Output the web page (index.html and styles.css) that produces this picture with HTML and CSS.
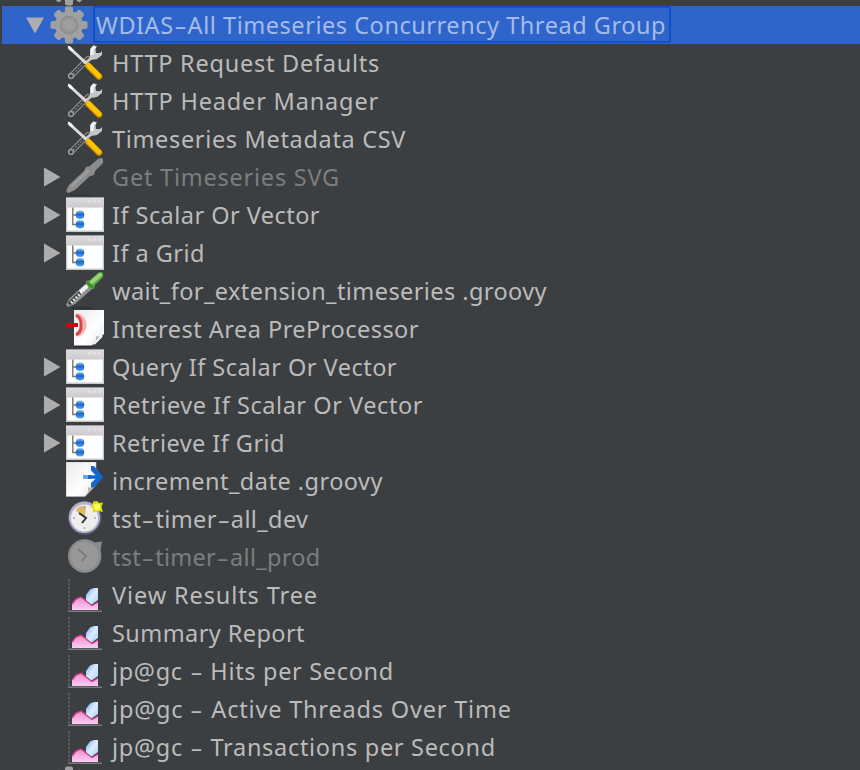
FILE: index.html
```
<!DOCTYPE html>
<html lang="en">
<head>
<meta charset="utf-8">
<title>Test Plan</title>
<link rel="stylesheet" href="styles.css">
</head>
<body>
<svg class="defs" aria-hidden="true">
  <defs>
    <linearGradient id="blade" x1="0" y1="0" x2="0" y2="1"><stop offset="0" stop-color="#dedce0"/><stop offset="1" stop-color="#cbcacc"/></linearGradient>
    <linearGradient id="ball" x1="0" y1="0" x2="0" y2="1"><stop offset="0" stop-color="#9cc4f4"/><stop offset=".45" stop-color="#1765cc"/><stop offset="1" stop-color="#5ba6f5"/></linearGradient>
    <linearGradient id="paper" x1="0" y1="0" x2="1" y2="1"><stop offset="0" stop-color="#e9e9e9"/><stop offset=".6" stop-color="#ffffff"/><stop offset="1" stop-color="#e4e4e4"/></linearGradient>
    <linearGradient id="pink" x1="0" y1="0" x2="0" y2="1"><stop offset="0" stop-color="#f08cc8"/><stop offset="1" stop-color="#fbcbf6"/></linearGradient>
    <linearGradient id="sky" x1="0" y1="0" x2="1" y2="1"><stop offset="0" stop-color="#6fb0f0"/><stop offset=".5" stop-color="#dcecff"/><stop offset="1" stop-color="#a9cdfa"/></linearGradient>
    <symbol id="gear" viewBox="0 0 38 42">
      <g fill="#a0a0a0"><circle cx="19" cy="21" r="14"/>
      <rect x="15" y="2.5" width="8" height="37" rx="2"/><rect x=".5" y="17" width="37" height="8" rx="2"/>
      <g transform="rotate(45 19 21)"><rect x="15" y="2.5" width="8" height="37" rx="2"/><rect x=".5" y="17" width="37" height="8" rx="2"/></g></g>
      <circle cx="19" cy="21" r="8.5" fill="#999" stroke="#8b8b8b" stroke-width="1.5"/>
      <circle cx="19" cy="21" r="5" fill="#a09f9d"/>
    </symbol>
    <symbol id="tools" viewBox="0 0 38 38">
      <path d="M5 32 L22 15" stroke="#909090" stroke-width="6" stroke-linecap="round"/>
      <path d="M5 32 L22 15" stroke="#3b3e40" stroke-width="3.6" stroke-linecap="round"/>
      <path d="M7 30 L22 15" stroke="#858585" stroke-width="1.2" stroke-dasharray="2 1.5"/>
      <circle cx="5" cy="32" r="2.4" fill="#3b3e40" stroke="#a0a0a0" stroke-width="1.3"/>
      <path d="M24 13 L24 5 L27 1.5 L31 2 L29.5 5 L30 9 L34 9 L36 7 L36 11 L31 15 L25 16 L20 20 L19 18 Z" fill="#c6c6c6"/>
      <path d="M26 11 L26.5 5 L29 2.5" stroke="#f4f4f4" stroke-width="3" fill="none"/>
      <path d="M2.5 3 L21 20" stroke="#dcdcdc" stroke-width="3"/>
      <path d="M1.5 1.5 L5 3 L8 7 L4 6.5 Z" fill="#fff"/>
      <path d="M22.5 22 L33 32.5" stroke="#d79000" stroke-width="6.5" stroke-linecap="round"/>
      <path d="M22.5 21.3 L33 31.8" stroke="#fbc600" stroke-width="4.6" stroke-linecap="round"/>
    </symbol>
    <symbol id="window" viewBox="0 0 38 38">
      <rect y="1.5" width="38" height="34.5" fill="#c9c9c9"/>
      <rect x="1.3" y="2" width="35.4" height="32.5" fill="#fff"/>
      <rect x="0" y="1.7" width="38" height="9.8" fill="url(#blade)"/>
      <path d="M22 5.5h13" stroke="#e3e0e3" stroke-width="2.5" stroke-dasharray="3 2"/>
      <path d="M6.8 11.5v17h5M6.8 19h5" stroke="#777" stroke-width="1.4" fill="none"/>
      <rect x="9.8" y="14.5" width="8.4" height="8.5" rx="3.8" fill="url(#ball)"/>
      <rect x="9.8" y="24" width="8.4" height="8.5" rx="3.8" fill="url(#ball)"/>
    </symbol>
    <symbol id="pipette-off" viewBox="0 0 38 38">
      <path d="M4 37h20" stroke="#333638" stroke-width="2"/>
      <path d="M0 33 L3 27 L18 13 L20 9 L24 8 L32 1 Q38 -2 37 5 L29 13 L28 17 L24 18 L9 32 L2 35 Z" fill="#8d8d8d"/>
      <path d="M5 29 L23 12" stroke="#9c9c9c" stroke-width="3"/>
    </symbol>
    <symbol id="pipette" viewBox="0 0 38 38">
      <path d="M6 36h20" stroke="#303335" stroke-width="2"/>
      <path d="M0 33 L3 27 L19 12 L26 17 L9 32 L2 35 Z" fill="#929292"/>
      <path d="M3 32 L15 20" stroke="#353839" stroke-width="3.5"/>
      <path d="M5 31 L21 15" stroke="#d9dcd9" stroke-width="3" stroke-dasharray="2 1.4"/>
      <path d="M14 20 L22 13" stroke="#f4f5f4" stroke-width="3.5"/>
      <path d="M20 9 L24 8 L32 1 Q38 -2 37 5 L29 13 L28 17 L24 17 L20 12 Z" fill="#55a640"/>
      <path d="M26 10 L34 3" stroke="#9bd27a" stroke-width="4" stroke-linecap="round"/>
      <path d="M21 10 L27 16" stroke="#347f2a" stroke-width="1.5"/>
    </symbol>
    <symbol id="pre" viewBox="0 0 38 38">
      <path d="M8 36.5h20" stroke="#2b2d2f" stroke-width="1.5"/>
      <path d="M8 0H38V24L26 35.5H8Z" fill="url(#paper)"/>
      <path d="M38 24 Q34 28 30 26 Q31 32 26 35.5Z" fill="#b5b5b5"/><path d="M36 26 L28 34" stroke="#f4f4f4" stroke-width="2"/>
      <path d="M11 5.5 A10 10 0 0 1 11 24.5" fill="none" stroke="#f3b5b5" stroke-width="5.5"/>
      <path d="M10 5 Q15.5 8 15 15 Q15.5 22 10 25" fill="none" stroke="#d5454d" stroke-width="3"/>
      <path d="M0 15h12" stroke="#c90a0a" stroke-width="4"/>
    </symbol>
    <symbol id="post" viewBox="0 0 38 38">
      <path d="M0 0H30V23L19 34.5H0Z" fill="url(#paper)" stroke="#b9b9b9" stroke-width=".6"/>
      <path d="M29 23 Q25 27 22 25 Q23 31 19 34.5Z" fill="#b2b2b2"/>
      <path d="M17 15h8" stroke="#6fa6e4" stroke-width="4"/>
      <path d="M22 13.2h7.5L25 8.5V4H28L37.5 15 28 25.5H25V21L29.5 16.8H22Z" fill="#1269cc"/>
    </symbol>
    <symbol id="timer" viewBox="0 0 38 38">
      <circle cx="18.7" cy="18" r="16.7" fill="#59567d"/>
      <circle cx="18.5" cy="17.3" r="15.7" fill="#b4b2c8"/>
      <circle cx="18.5" cy="18" r="13.5" fill="#efefed"/>
      <path d="M9.5 10.5 Q13 5 20 6 L19 17 Z" fill="#d9bc68"/>
      <path d="M13 13 L20 18 L16 23" stroke="#343434" stroke-width="2" fill="none"/>
      <path d="M18.5 7v2M18.5 27v2M7 18h2M28 18h2" stroke="#aaa" stroke-width="1.5"/>
      <path d="M31 1 L33 3 L37 2.5 L35.5 7 L37 12 L32 11 L27 12.5 L27 9 L24.5 7 L27 5 L27 1.5Z" fill="#dedb00"/>
      <circle cx="31" cy="7" r="3.4" fill="#fffc62"/>
    </symbol>
    <symbol id="timer-off" viewBox="0 0 38 38">
      <path d="M28 4.5L36 3.5L34.5 12L32 14Z" fill="#8b8b8b"/>
      <circle cx="18.7" cy="18" r="16.7" fill="#8b8b8b"/><circle cx="18.5" cy="18" r="14" fill="#989898"/>
      <path d="M12 11L20 18L16 23" stroke="#7b7b7b" stroke-width="2" fill="none"/>
    </symbol>
    <symbol id="graph" viewBox="0 0 38 38">
      <path d="M3 3V35" stroke="#686a6c" stroke-width="1.4" stroke-dasharray="2.5 1.5"/>
      <path d="M2 35.2H36" stroke="#77797b" stroke-width="1.6"/>
      <path d="M6 34V28L10 23L15 21L20 24L26 29.5L32 26V34Z" fill="url(#pink)"/>
      <path d="M6 28L10 23L15 21L20 25L26 29.5L32 26" fill="none" stroke="#c63f83" stroke-width="1.4"/>
      <path d="M25.5 28.5L20 24V19L24 13.5L28 12H32V24Z" fill="url(#sky)"/>
    </symbol>
  </defs>
</svg>
<main class="tree" id="tree"></main>
<script src="tree.js"></script>
</body>
</html>
```
FILE: styles.css
```
* { box-sizing: border-box; }
body { margin: 0; background: #3c3f41; }
.defs { position: absolute; width: 0; height: 0; }
.tree {
  width: 860px; height: 770px; overflow: hidden;
  display: flex; flex-direction: column; justify-content: flex-start;
  font-family: "Noto Sans", sans-serif; font-size: 23.5px; color: #bbbbbb;
}
.row { flex: 0 0 38px; height: 38px; display: flex; align-items: center; padding-left: 44px; }
.row:first-child { margin-top: -32px; }
.row.group { padding-left: 26px; }
.row.selected { margin-left: 2px; padding-left: 24px; background: #2f65ca; color: #a4bce8; }
.row.off { color: #7b7d7f; }
.toggle { flex: 0 0 22px; height: 20px; display: flex; }
.group .toggle { flex-basis: 24px; }
.toggle svg { width: 18px; height: 20px; fill: #adadad; }
.icon { flex: 0 0 38px; width: 38px; height: 38px; overflow: visible; }
.icon.gear { height: 42px; }
.label { margin-left: 8px; line-height: 36px; white-space: pre; letter-spacing: .6px; }
.group .label { align-self: flex-start; margin-left: 5px; height: 37px; padding: 0 3px 0 1px; border: 2px solid transparent; }
.selected .label { border-color: #0f52d0; line-height: 35px; }
.hyphen { display: inline-block; width: 14px; text-align: center; transform: scaleX(1.65); }
```
FILE: tree.js
```
const items = [
  ["gear", "", "group"],
  ["gear", "WDIAS-All Timeseries Concurrency Thread Group", "group selected", "down", 570],
  ["tools", "HTTP Request Defaults", "", "", 268],
  ["tools", "HTTP Header Manager", "", "", 267],
  ["tools", "Timeseries Metadata CSV", "", "", 294],
  ["pipette-off", "Get Timeseries SVG", "off", "right", 228],
  ["window", "If Scalar Or Vector", "", "right", 208],
  ["window", "If a Grid", "", "right", 93],
  ["pipette", "wait_for_extension_timeseries .groovy", "", "", 435],
  ["pre", "Interest Area PreProcessor", "", "", 307],
  ["window", "Query If Scalar Or Vector", "", "right", 285],
  ["window", "Retrieve If Scalar Or Vector", "", "right", 311],
  ["window", "Retrieve If Grid", "", "right", 173],
  ["post", "increment_date .groovy", "", "", 271],
  ["timer", "tst-timer-all_dev", "", "", 196],
  ["timer-off", "tst-timer-all_prod", "off", "", 208],
  ["graph", "View Results Tree", "", "", 206],
  ["graph", "Summary Report", "", "", 193],
  ["graph", "jp@gc - Hits per Second", "", "", 282],
  ["graph", "jp@gc - Active Threads Over Time", "", "", 400],
  ["graph", "jp@gc - Transactions per Second", "", "", 384],
  ["gear", "", "group"]
];
const arrows = {
  down: '<svg viewBox="0 0 18 20"><path d="M0 2.5H18L9 18.5Z"/></svg>',
  right: '<svg viewBox="0 0 18 20"><path d="M0 .5V19.5L16.5 10Z"/></svg>'
};
document.getElementById("tree").innerHTML = items.map(([icon, text, cls, arrow]) =>
  `<div class="row ${cls}"><span class="toggle">${arrows[arrow] || ""}</span>` +
  `<svg class="icon ${icon}"><use href="#${icon}"/></svg>` +
  `<span class="label"><span class="text">${text.replace(/-/g, '<span class="hyphen">-</span>')}</span></span></div>`
).join("");

document.querySelectorAll(".text").forEach((el, i) => {
  const [, text, , , width] = items[i];
  if (!width) return;
  const now = el.getBoundingClientRect().width;
  el.style.letterSpacing = (0.6 + (width - now) / text.length) + "px";
});
```
